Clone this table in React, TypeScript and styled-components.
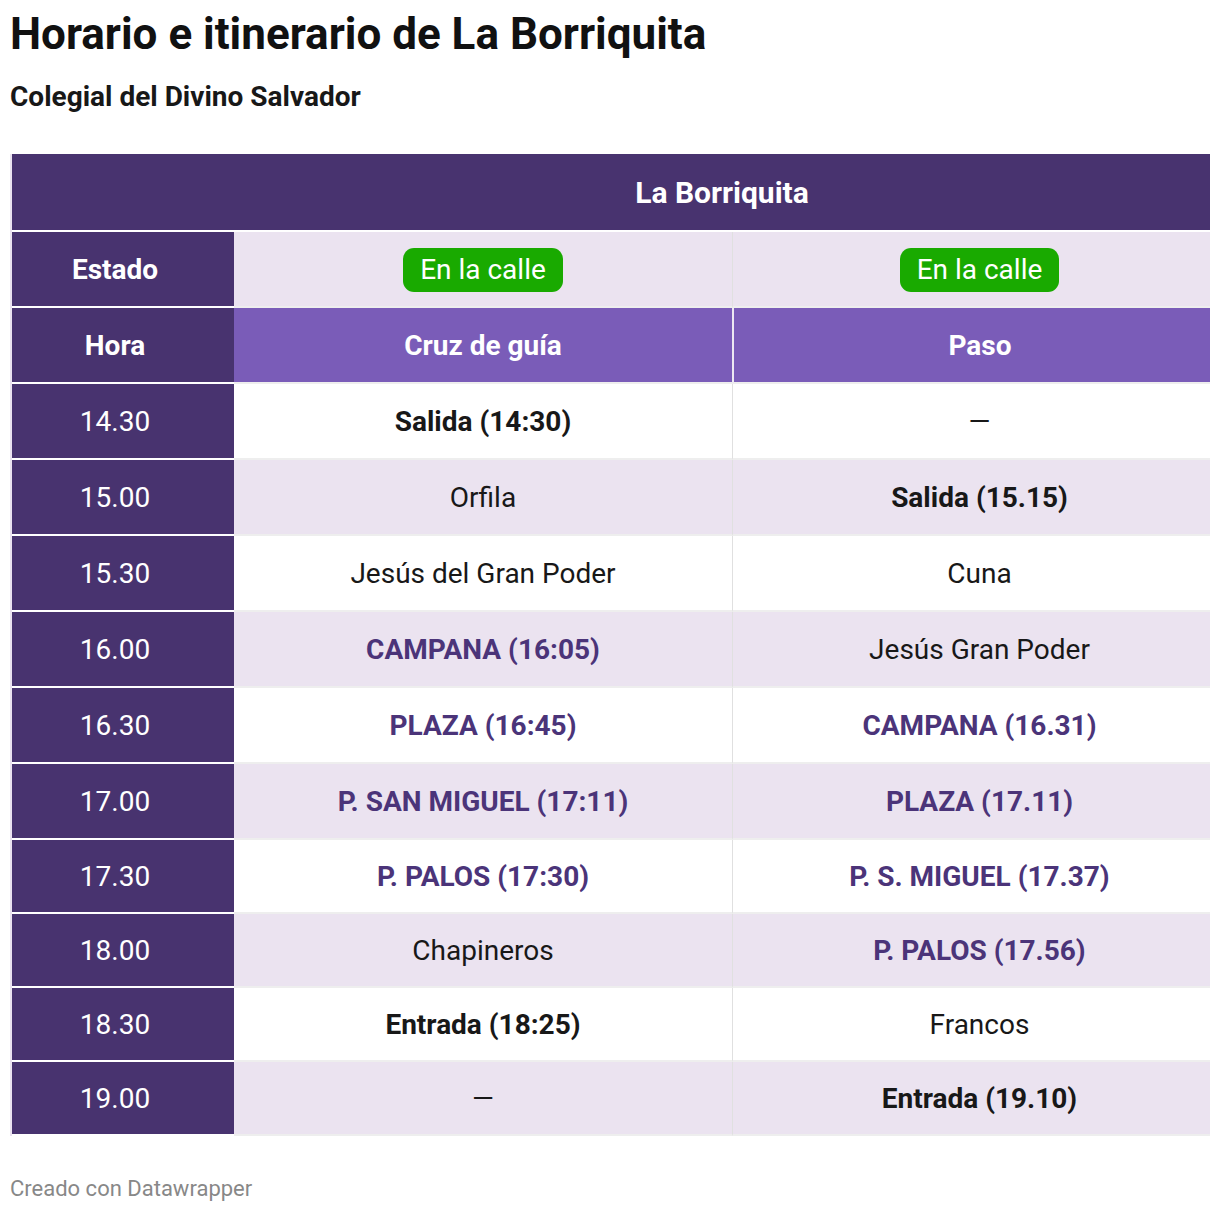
import React from "react";
import styled, { createGlobalStyle } from "styled-components";

const Global = createGlobalStyle`
  html, body { margin: 0; padding: 0; background: #fff; }
  body { font-family: Roboto, "Liberation Sans", sans-serif; color: #181818; }
`;

const DARK = "#48336f";
const MID = "#7a5cb8";
const LAV = "#ebe3f0";
const ACCENT = "#4b3479";

const Page = styled.div`
  width: 1220px;
  padding: 0 10px;
  box-sizing: border-box;
`;

const Title = styled.h1`
  margin: 0;
  padding-top: 9px;
  font-size: 44px;
  line-height: 50px;
  font-weight: 700;
  color: #111;
`;

const Subtitle = styled.h2`
  margin: 0;
  padding-top: 22px;
  font-size: 28px;
  line-height: 32px;
  font-weight: 700;
  color: #181818;
`;

const Table = styled.div`
  margin-top: 41px;
  border-left: 2px solid ${LAV};
  display: grid;
  grid-template-columns: 222px 498px 1fr;
`;

type CellProps = { $bg: string; $sep?: boolean; $h?: number; $col?: 1 | 2 | 3 };

const Cell = styled.div<CellProps>`
  height: ${(p) => p.$h ?? 74}px;
  background: ${(p) => p.$bg};
  display: flex;
  align-items: center;
  justify-content: center;
  box-sizing: content-box;
  padding-right: ${(p) => (p.$col === 1 ? 16 : 0)}px;
  padding-left: ${(p) => (p.$col === 3 ? 16 : 0)}px;
  border-bottom: 2px solid #eeeeee;
  border-left: ${(p) => (p.$sep ? "1px solid #e0e0e0" : "none")};
  font-size: 28px;
  min-width: 0;
`;

const HeadBlank = styled.div`
  height: 76px;
  background: ${DARK};
  border-bottom: 2px solid #fff;
`;

const TopHead = styled.div`
  grid-column: 2 / 4;
  height: 76px;
  background: ${DARK};
  color: #fff;
  font-weight: 700;
  font-size: 30px;
  display: flex;
  align-items: center;
  justify-content: center;
  border-bottom: 2px solid #fff;
`;

const RowHead = styled(Cell)<{ $bold?: boolean }>`
  color: #fff;
  font-weight: ${(p) => (p.$bold ? 700 : 400)};
  border-bottom: 2px solid #fff;
`;

const ColHead = styled(Cell)`
  color: #fff;
  font-weight: 700;
  border-left: ${(p) => (p.$sep ? "2px solid #ece8f2" : "none")};
`;

const Text = styled.span<{ $kind: "plain" | "bold" | "hl" }>`
  font-weight: ${(p) => (p.$kind === "plain" ? 400 : 700)};
  color: ${(p) => (p.$kind === "hl" ? ACCENT : "#181818")};
`;

const Badge = styled.span`
  background: #19aa00;
  color: #fff;
  font-size: 28px;
  line-height: 44px;
  height: 44px;
  padding: 0 17px;
  margin-top: 2px;
  border-radius: 11px;
`;

const Footer = styled.div`
  margin-top: 40px;
  font-size: 22px;
  line-height: 26px;
  color: #888;
`;

type Kind = "plain" | "bold" | "hl";
type Row = { h: string; a: [string, Kind]; b: [string, Kind] };

const rows: Row[] = [
  { h: "14.30", a: ["Salida (14:30)", "bold"], b: ["—", "plain"] },
  { h: "15.00", a: ["Orfila", "plain"], b: ["Salida (15.15)", "bold"] },
  { h: "15.30", a: ["Jesús del Gran Poder", "plain"], b: ["Cuna", "plain"] },
  { h: "16.00", a: ["CAMPANA (16:05)", "hl"], b: ["Jesús Gran Poder", "plain"] },
  { h: "16.30", a: ["PLAZA (16:45)", "hl"], b: ["CAMPANA (16.31)", "hl"] },
  { h: "17.00", a: ["P. SAN MIGUEL (17:11)", "hl"], b: ["PLAZA (17.11)", "hl"] },
  { h: "17.30", a: ["P. PALOS (17:30)", "hl"], b: ["P. S. MIGUEL (17.37)", "hl"] },
  { h: "18.00", a: ["Chapineros", "plain"], b: ["P. PALOS (17.56)", "hl"] },
  { h: "18.30", a: ["Entrada (18:25)", "bold"], b: ["Francos", "plain"] },
  { h: "19.00", a: ["—", "plain"], b: ["Entrada (19.10)", "bold"] },
];

export default function App() {
  return (
    <Page>
      <Global />
      <Title>Horario e itinerario de La Borriquita</Title>
      <Subtitle>Colegial del Divino Salvador</Subtitle>
      <Table>
        <HeadBlank />
        <TopHead>La Borriquita</TopHead>
        <RowHead $bg={DARK} $col={1} $bold>Estado</RowHead>
        <Cell $bg={LAV} $col={2}><Badge>En la calle</Badge></Cell>
        <Cell $bg={LAV} $col={3} $sep><Badge>En la calle</Badge></Cell>
        <RowHead $bg={DARK} $col={1} $bold>Hora</RowHead>
        <ColHead $bg={MID} $col={2}>Cruz de guía</ColHead>
        <ColHead $bg={MID} $col={3} $sep>Paso</ColHead>
        {rows.map((r, i) => {
          const bg = i % 2 === 0 ? "#fff" : LAV;
          const h = i < 6 ? 74 : 72;
          return (
            <React.Fragment key={r.h}>
              <RowHead $bg={DARK} $col={1} $h={h}>{r.h}</RowHead>
              <Cell $bg={bg} $col={2} $h={h}><Text $kind={r.a[1]}>{r.a[0]}</Text></Cell>
              <Cell $bg={bg} $col={3} $h={h} $sep><Text $kind={r.b[1]}>{r.b[0]}</Text></Cell>
            </React.Fragment>
          );
        })}
      </Table>
      <Footer>Creado con Datawrapper</Footer>
    </Page>
  );
}
